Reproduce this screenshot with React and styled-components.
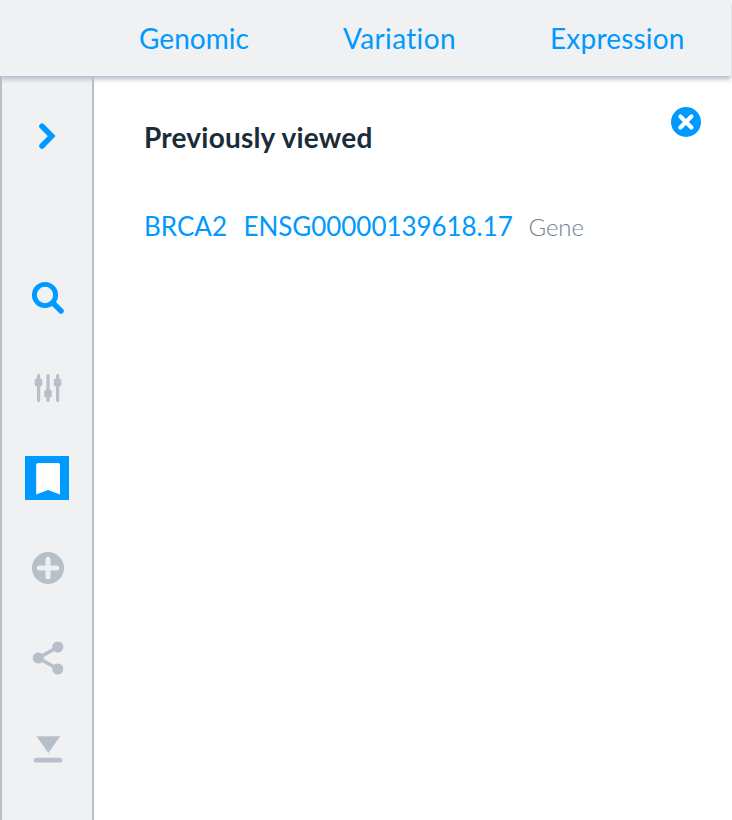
import React from 'react';
import styled, { createGlobalStyle } from 'styled-components';

const BLUE = '#0099ff';
const GREY = '#b7c0c8';

const GlobalStyle = createGlobalStyle`
  * { box-sizing: border-box; }
  body {
    margin: 0;
    background: #fff;
    overflow: hidden;
    font-family: Lato, sans-serif;
    font-variant-ligatures: none;
  }
`;

const Page = styled.div`
  display: flex;
  flex-direction: column;
  height: 820px;
  width: 732px;
`;

const Header = styled.nav`
  position: relative;
  z-index: 1;
  display: flex;
  flex: none;
  gap: 94px;
  width: 731px;
  height: 76px;
  padding: 21px 0 0 139px;
  background: #f0f1f3;
  box-shadow: 0 3px 5px #b0bac5;
`;

const Tab = styled.a`
  width: ${(p) => p.$width}px;
  font-size: 28px;
  line-height: 34px;
  letter-spacing: ${(p) => p.$tracking}px;
  white-space: nowrap;
  color: ${BLUE};
`;

const Body = styled.div`
  display: flex;
  flex: 1;
`;

const Sidebar = styled.aside`
  display: flex;
  flex-direction: column;
  align-items: center;
  gap: 118px;
  width: 94px;
  padding-top: 38px;
  background: #f0f1f3;
  border: solid ${GREY};
  border-width: 0 2px;
`;

const Tools = styled.div`
  display: flex;
  flex-direction: column;
  gap: 46px;
`;

const ToolIcon = styled.svg`
  display: block;
  width: 44px;
  height: 44px;
  color: ${(p) => (p.$active ? BLUE : GREY)};
  background: ${(p) => (p.$selected ? BLUE : 'transparent')};
`;

const Panel = styled.main`
  flex: 1;
  padding: 31px 31px 0 50px;
`;

const PanelHeader = styled.div`
  display: flex;
  justify-content: space-between;
`;

const Title = styled.h1`
  margin: 13px 0 0;
  font-size: 28px;
  line-height: 34px;
  font-weight: 700;
  letter-spacing: 0.2px;
  word-spacing: 0.4px;
  color: #1b2c39;
`;

const CloseIcon = styled.svg`
  width: 30px;
  height: 30px;
`;

const Entry = styled.div`
  display: flex;
  align-items: baseline;
  margin-top: 56px;
  font-size: 26px;
  line-height: 32px;
  color: ${BLUE};
`;

const Symbol = styled.span`
  width: 99.5px;
`;

const StableId = styled.span`
  width: 285px;
  letter-spacing: -0.05px;
`;

const Kind = styled.span`
  font-size: 24px;
  font-weight: 300;
  letter-spacing: -0.1px;
  color: #6f8190;
`;

export default function App() {
  return (
    <Page>
      <GlobalStyle />
      <Header>
        <Tab $width={110} $tracking={0.05}>Genomic</Tab>
        <Tab $width={113} $tracking={0.35}>Variation</Tab>
        <Tab $width={136} $tracking={0.2}>Expression</Tab>
      </Header>
      <Body>
        <Sidebar>
          <ToolIcon $active viewBox="0 0 44 44">
            <path d="M17 12.2 26.7 22.1 17 32" fill="none" stroke="currentColor" strokeWidth="5.6" strokeLinecap="round" />
          </ToolIcon>
          <Tools>
            <ToolIcon $active viewBox="0 0 44 44" fill="none" stroke="currentColor">
              <circle cx="20" cy="19" r="10.6" strokeWidth="4.9" />
              <path d="m28 27 8.1 8" strokeWidth="5.4" strokeLinecap="round" />
            </ToolIcon>
            <ToolIcon viewBox="0 0 44 44" fill="currentColor">
              <rect x="12" y="8" width="3.2" height="28" rx="1.5" />
              <rect x="21.4" y="8" width="3.2" height="28" rx="1.5" />
              <rect x="31" y="8" width="3.2" height="28" rx="1.5" />
              <rect x="9.7" y="12.6" width="7.6" height="7.8" rx="2" />
              <rect x="19.2" y="23.8" width="7.6" height="7.8" rx="2" />
              <rect x="28.8" y="12.6" width="7.6" height="7.8" rx="2" />
            </ToolIcon>
            <ToolIcon $selected viewBox="0 0 44 44">
              <path d="M11.2 38.5V9q0-2 2-2H33q2 0 2 2v29.5L23.1 34Z" fill="#fff" />
            </ToolIcon>
            <ToolIcon viewBox="0 0 44 44">
              <circle cx="23" cy="22" r="16" fill="currentColor" />
              <path d="M23 13.2v17.6M14.2 22h17.6" stroke="#f0f1f3" strokeWidth="5" strokeLinecap="round" />
            </ToolIcon>
            <ToolIcon viewBox="0 0 44 44" fill="currentColor">
              <path d="M33 11 13.3 22 33 33" fill="none" stroke="currentColor" strokeWidth="3.6" />
              <circle cx="32.8" cy="11" r="5.6" />
              <circle cx="13.3" cy="22" r="5.6" />
              <circle cx="32.8" cy="33" r="5.6" />
            </ToolIcon>
            <ToolIcon viewBox="0 0 44 44" fill="currentColor">
              <path d="M11.5 10.2h23.7L23.3 27Z" />
              <rect x="8.8" y="31.8" width="28.4" height="4.8" rx="2.4" />
            </ToolIcon>
          </Tools>
        </Sidebar>
        <Panel>
          <PanelHeader>
            <Title>Previously viewed</Title>
            <CloseIcon viewBox="0 0 30 30">
              <circle cx="15" cy="15" r="15" fill={BLUE} />
              <path d="m9.4 9.5 11 11m0-11-11 11" stroke="#fff" strokeWidth="4.2" strokeLinecap="round" />
            </CloseIcon>
          </PanelHeader>
          <Entry>
            <Symbol>BRCA2</Symbol>
            <StableId>ENSG00000139618.17</StableId>
            <Kind>Gene</Kind>
          </Entry>
        </Panel>
      </Body>
    </Page>
  );
}
